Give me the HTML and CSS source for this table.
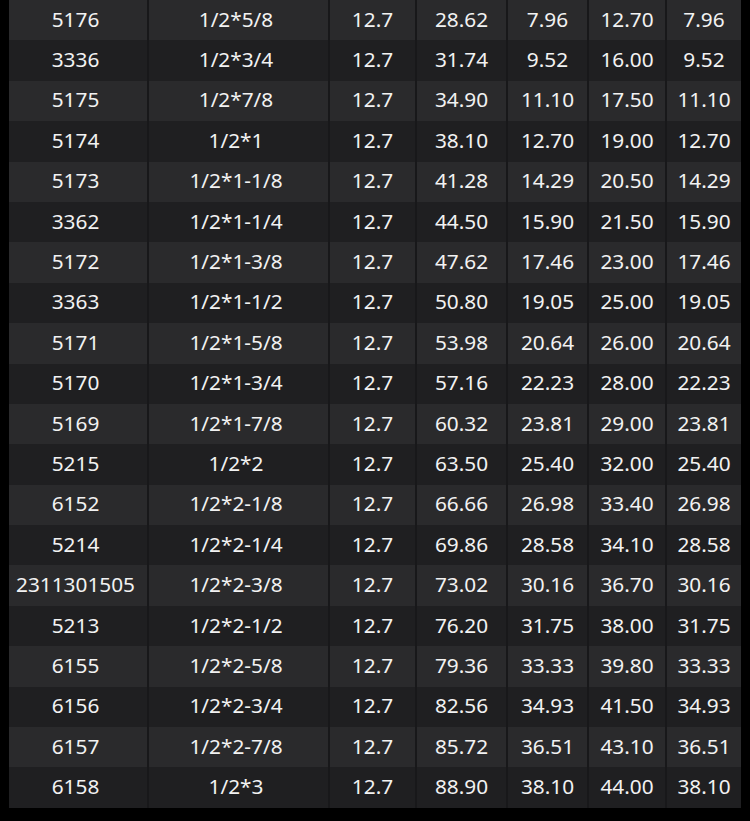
FILE: index.html
```html
<!DOCTYPE html>
<html>
<head>
<meta charset="utf-8">
<link rel="stylesheet" href="styles.css">
</head>
<body>
<table class="spec">
<colgroup>
<col class="c1"><col class="c2"><col class="c3"><col class="c4"><col class="c5"><col class="c6"><col class="c7">
</colgroup>
<tbody>
<tr><td>5176</td><td>1/2*5/8</td><td>12.7</td><td>28.62</td><td>7.96</td><td>12.70</td><td>7.96</td></tr>
<tr><td>3336</td><td>1/2*3/4</td><td>12.7</td><td>31.74</td><td>9.52</td><td>16.00</td><td>9.52</td></tr>
<tr><td>5175</td><td>1/2*7/8</td><td>12.7</td><td>34.90</td><td>11.10</td><td>17.50</td><td>11.10</td></tr>
<tr><td>5174</td><td>1/2*1</td><td>12.7</td><td>38.10</td><td>12.70</td><td>19.00</td><td>12.70</td></tr>
<tr><td>5173</td><td>1/2*1-1/8</td><td>12.7</td><td>41.28</td><td>14.29</td><td>20.50</td><td>14.29</td></tr>
<tr><td>3362</td><td>1/2*1-1/4</td><td>12.7</td><td>44.50</td><td>15.90</td><td>21.50</td><td>15.90</td></tr>
<tr><td>5172</td><td>1/2*1-3/8</td><td>12.7</td><td>47.62</td><td>17.46</td><td>23.00</td><td>17.46</td></tr>
<tr><td>3363</td><td>1/2*1-1/2</td><td>12.7</td><td>50.80</td><td>19.05</td><td>25.00</td><td>19.05</td></tr>
<tr><td>5171</td><td>1/2*1-5/8</td><td>12.7</td><td>53.98</td><td>20.64</td><td>26.00</td><td>20.64</td></tr>
<tr><td>5170</td><td>1/2*1-3/4</td><td>12.7</td><td>57.16</td><td>22.23</td><td>28.00</td><td>22.23</td></tr>
<tr><td>5169</td><td>1/2*1-7/8</td><td>12.7</td><td>60.32</td><td>23.81</td><td>29.00</td><td>23.81</td></tr>
<tr><td>5215</td><td>1/2*2</td><td>12.7</td><td>63.50</td><td>25.40</td><td>32.00</td><td>25.40</td></tr>
<tr><td>6152</td><td>1/2*2-1/8</td><td>12.7</td><td>66.66</td><td>26.98</td><td>33.40</td><td>26.98</td></tr>
<tr><td>5214</td><td>1/2*2-1/4</td><td>12.7</td><td>69.86</td><td>28.58</td><td>34.10</td><td>28.58</td></tr>
<tr><td>2311301505</td><td>1/2*2-3/8</td><td>12.7</td><td>73.02</td><td>30.16</td><td>36.70</td><td>30.16</td></tr>
<tr><td>5213</td><td>1/2*2-1/2</td><td>12.7</td><td>76.20</td><td>31.75</td><td>38.00</td><td>31.75</td></tr>
<tr><td>6155</td><td>1/2*2-5/8</td><td>12.7</td><td>79.36</td><td>33.33</td><td>39.80</td><td>33.33</td></tr>
<tr><td>6156</td><td>1/2*2-3/4</td><td>12.7</td><td>82.56</td><td>34.93</td><td>41.50</td><td>34.93</td></tr>
<tr><td>6157</td><td>1/2*2-7/8</td><td>12.7</td><td>85.72</td><td>36.51</td><td>43.10</td><td>36.51</td></tr>
<tr><td>6158</td><td>1/2*3</td><td>12.7</td><td>88.90</td><td>38.10</td><td>44.00</td><td>38.10</td></tr>
</tbody>
</table>
</body>
</html>
```
FILE: styles.css
```css
html, body {
  margin: 0;
  padding: 0;
  background: #000;
}
.spec {
  margin-left: 9px;
  width: 732px;
  border-collapse: collapse;
  table-layout: fixed;
  font-family: "Noto Sans", "Open Sans", sans-serif;
  font-size: 20.8px;
  color: #f2f2f2;
}
.c1 { width: 139px; }
.c2 { width: 181px; }
.c3 { width: 87px; }
.c4 { width: 91px; }
.c5 { width: 81px; }
.c6 { width: 78px; }
.c7 { width: 75px; }
.spec tr {
  height: 40.4px;
}
.spec tr:nth-child(odd) { background: #2a2a2c; }
.spec tr:nth-child(even) { background: #1f1f21; }
.spec td {
  padding: 0 0 3px 0;
  text-align: center;
  vertical-align: middle;
  line-height: 20px;
  border-right: 2px solid #18181a;
  white-space: nowrap;
}
.spec td:first-child,
.spec td:nth-child(2) {
  padding-right: 5px;
}
.spec td:last-child { border-right: none; }
```
